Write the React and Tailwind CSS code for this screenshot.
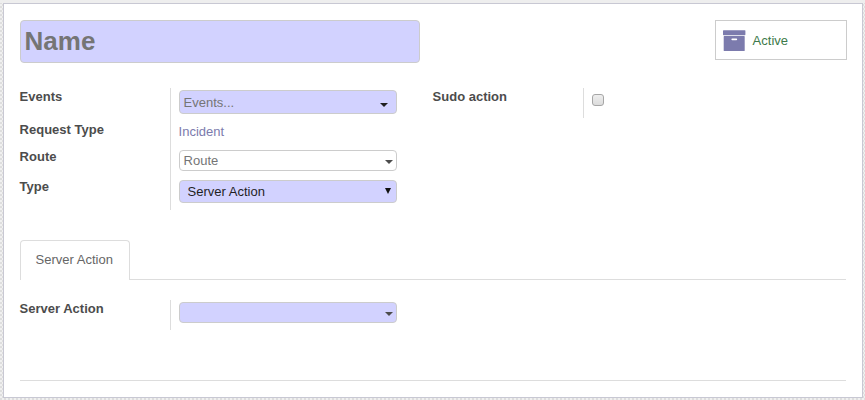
import React from "react";

const FIELD =
  "flex w-[218px] items-center justify-between rounded-[4px] border border-[#cccccc] pl-[3.6px]";

function Caret({ className = "" }) {
  return (
    <svg width="8" height="4" viewBox="0 0 8 4" className={className} fill="currentColor">
      <path d="M0 0h8L4 4z" />
    </svg>
  );
}

function Row({ label, className, children }) {
  return (
    <div className={`flex ${className}`}>
      <div className="-ml-[0.4px] w-[150.4px] text-[13px] leading-[18px] font-bold text-[#4c4c4c]">{label}</div>
      <div className="border-l border-[#dddddd] pt-[2px] pl-2">{children}</div>
    </div>
  );
}

function ArchiveIcon() {
  return (
    <svg width="23" height="22" viewBox="0 0 23 22" fill="#7c7bad">
      <rect x="0" y="0.2" width="22.4" height="5" rx="0.6" />
      <path
        fillRule="evenodd"
        d="M1.2 6.1h20q.5 0 .5.6v13.7q0 .6-.6.6H1.3q-.6 0-.6-.6V6.7q0-.6.5-.6zM9.3 8.4a.9.9 0 0 0 0 1.8h4a.9.9 0 0 0 0-1.8z"
      />
    </svg>
  );
}

export default function App() {
  return (
    <div className="h-[400px] w-[865px] overflow-hidden bg-[repeating-conic-gradient(#dedede_0_25%,#f0f0f0_0_50%)] bg-[length:4px_4px] font-['Liberation_Sans',Arial,sans-serif] text-[13px] text-[#4c4c4c]">
      <div className="h-[3px] bg-[#eeeeee]" />
      <main className="ml-[3px] h-[395px] w-[860px] border border-[#c8c8d3] bg-white px-4 pt-4">
        <header className="flex h-[68px] w-[827px] items-start justify-between">
          <div className="flex h-[43px] w-[400px] items-center rounded-[4px] border border-[#cccccc] bg-[#d2d2ff] pb-[2px] pl-[3.6px] text-[26px] leading-[30px] font-bold text-[#757575]">
            Name
          </div>
          <button className="flex h-[40px] w-[132px] items-center border border-[#cccccc] pt-[2px] pl-[7px] text-[13px] text-[#3d7a4a]">
            <ArchiveIcon />
            <span className="ml-[6.6px]">Active</span>
          </button>
        </header>

        <section className="flex h-[152px]">
          <div className="w-[413px]">
            <Row label="Events" className="h-[33px]">
              <div className={`${FIELD} h-[24px] bg-[#d2d2ff] text-[#757575]`}>
                <span className="pt-[2px]">Events...</span>
                <Caret className="mt-[5px] mr-[8px] text-[#1f1f1f]" />
              </div>
            </Row>
            <Row label="Request Type" className="h-[27px]">
              <a className="-ml-[0.4px] block leading-[18px] text-[#7c7bad]">Incident</a>
            </Row>
            <Row label="Route" className="h-[30px]">
              <div className={`${FIELD} h-[21px] bg-white text-[#757575]`}>
                Route
                <Caret className="mt-[3px] mr-[3px] text-[#4c4c4c]" />
              </div>
            </Row>
            <Row label="Type" className="h-[32px]">
              <div className={`${FIELD} h-[23px] bg-[#d2d2ff] text-[#1f1f1f]`}>
                <span className="pl-1">Server Action</span>
                <svg width="6" height="6" viewBox="0 0 6 6" className="mr-[5px] mb-[2px]">
                  <path d="M0 0h6L3 6z" fill="#111111" />
                </svg>
              </div>
            </Row>
          </div>
          <div className="flex h-[30px]">
            <div className="-ml-[0.4px] w-[150.4px] leading-[18px] font-bold">Sudo action</div>
            <div className="border-l border-[#dddddd] pt-[6px] pl-2">
              <div className="h-[12px] w-[12px] rounded-[3px] border border-[#a6a6a6] bg-linear-to-b from-[#eeeeee] to-[#dcdcdc]" />
            </div>
          </div>
        </section>

        <nav className="flex h-[40px] w-[826px]">
          <div className="flex w-[110px] items-center rounded-t-[4px] border border-b-0 border-[#dddddd] pb-[2px] pl-[14.6px] text-[#666666]">
            Server Action
          </div>
          <div className="flex-1 border-b border-[#dddddd]" />
        </nav>

        <section className="h-[101px] w-[826px] border-b border-[#dddddd] pt-5">
          <Row label="Server Action" className="h-[30px]">
            <div className={`${FIELD} h-[21px] bg-[#d2d2ff]`}>
              <span />
              <Caret className="mt-[3px] mr-[3px] text-[#4c4c4c]" />
            </div>
          </Row>
        </section>
      </main>
    </div>
  );
}
